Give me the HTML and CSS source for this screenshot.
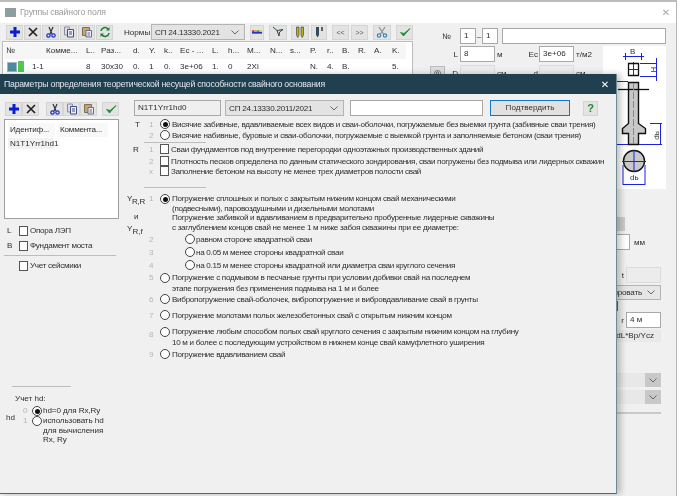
FILE: index.html
```html
<!DOCTYPE html>
<html lang="ru">
<head>
<meta charset="utf-8">
<title>Параметры свайного основания</title>
<link rel="stylesheet" href="styles.css">
</head>
<body>
<svg class="defs" width="0" height="0">
  <symbol id="i-plus" viewBox="0 0 12 12"><path d="M4.500 1h3v3.500H11v3H7.500V11h-3V7.500H1v-3h3.500z" fill="#0a1fd0"/></symbol>
  <symbol id="i-x" viewBox="0 0 12 12"><path d="M2 2l8 8M10 2l-8 8" stroke="#222" stroke-width="1.700" fill="none"/></symbol>
  <symbol id="i-cut" viewBox="0 0 12 12"><path d="M4 1l3 7M8 1L5 8" stroke="#334" stroke-width="1.200" fill="none"/><circle cx="3.500" cy="9.500" r="1.700" fill="none" stroke="#1a2fc0" stroke-width="1.200"/><circle cx="8.500" cy="9.500" r="1.700" fill="none" stroke="#1a2fc0" stroke-width="1.200"/></symbol>
  <symbol id="i-cut2" viewBox="0 0 12 12"><path d="M3 1l4.500 7M9 1L4.500 8" stroke="#8a8f98" stroke-width="1.200" fill="none"/><circle cx="3" cy="9.500" r="1.700" fill="none" stroke="#3f86b8" stroke-width="1.200"/><circle cx="9" cy="9.500" r="1.700" fill="none" stroke="#3f86b8" stroke-width="1.200"/></symbol>
  <symbol id="i-copy" viewBox="0 0 12 12"><path d="M1.500 1h5v8h-5z" fill="#d9dce6" stroke="#8a90a6"/><path d="M4.500 3.500h6V11h-6z" fill="#eef0f6" stroke="#3f4d85"/><path d="M6 6h3M6 8h3" stroke="#3f4d85"/></symbol>
  <symbol id="i-paste" viewBox="0 0 12 12"><path d="M1.500 1.500h7v8h-7z" fill="#c5a76a" stroke="#7d7058"/><path d="M5 4.500h5.500V11H5z" fill="#eceef3" stroke="#656e8a"/><path d="M6.500 7h2.500M6.500 9h2.500" stroke="#656e8a"/></symbol>
  <symbol id="i-check" viewBox="0 0 12 12"><path d="M1.500 6.500l3 3.500L11 2.500 5 7.500z" fill="#1f8a2e" stroke="#1f8a2e" stroke-width=".8"/></symbol>
  <symbol id="i-refresh" viewBox="0 0 12 12"><path d="M2 5a4 4 0 0 1 7-2M10 7a4 4 0 0 1-7 2" stroke="#1c7f2c" stroke-width="1.600" fill="none"/><path d="M10.500 1v3.500H7zM1.500 11V7.500H5z" fill="#1c7f2c"/></symbol>
  <symbol id="i-chev" viewBox="0 0 8 5"><path d="M.5.500L4 4 7.500.500" stroke="#666" fill="none"/></symbol>
</svg>

<div class="desk">
  <section class="win back">
    <header class="back-title">
      <span class="app-ico"></span><span class="back-name">Группы свайного поля</span>
      <span class="back-close">✕</span>
    </header>
    <div class="back-body">
      <div class="back-left">
        <div class="tools">
          <button class="tb"><svg><use href="#i-plus"/></svg></button>
          <button class="tb"><svg><use href="#i-x"/></svg></button>
          <button class="tb"><svg><use href="#i-cut"/></svg></button>
          <button class="tb"><svg><use href="#i-copy"/></svg></button>
          <button class="tb"><svg><use href="#i-paste"/></svg></button>
          <button class="tb"><svg><use href="#i-refresh"/></svg></button>
          <span class="norm-lab">Нормы</span>
          <span class="sel norm-sel">СП 24.13330.2021<svg class="chev"><use href="#i-chev"/></svg></span>
          <button class="tb t-a"><svg viewBox="0 0 12 12"><path d="M0 4h3v2H0z" fill="#d22"/><path d="M3 4h3v2H3z" fill="#c93"/><path d="M6 4h3v2H6z" fill="#2a3"/><path d="M9 4h3v2H9z" fill="#fb0"/><path d="M0 6h12v2H0z" fill="#23c"/></svg></button>
          <button class="tb t-b"><svg viewBox="0 0 12 12"><path d="M1 1l4 3.500L11 3.500 7.500 6 7 10 5 4.500" fill="none" stroke="#344" stroke-width="1"/></svg></button>
          <button class="tb t-c"><svg viewBox="0 0 12 12"><path d="M2.500 1h2.500v8L3.700 11.500 2.500 9zM7 1h2.500v8L8.200 11.500 7 9z" fill="#b9b21e" stroke="#333" stroke-width=".6"/></svg></button>
          <button class="tb t-d"><svg viewBox="0 0 12 12"><path d="M3 1h3v8L4.500 11.500 3 9z" fill="#34495e"/><path d="M9 1v4" stroke="#333" stroke-width="1.500"/></svg></button>
          <button class="tb t-e">&lt;&lt;</button>
          <button class="tb t-f">&gt;&gt;</button>
          <button class="tb t-g"><svg><use href="#i-cut2"/></svg></button>
          <button class="tb t-h"><svg><use href="#i-check"/></svg></button>
        </div>
        <div class="ptable">
          <div class="prow phead">
            <span class="c1">№</span><span class="c2">Комме...</span><span class="c3">L..</span><span class="c4">Раз...</span><span class="c5">d.</span><span class="c6">Y.</span><span class="c7">k..</span><span class="c8">Ec - ...</span><span class="c9">L.</span><span class="c10">h...</span><span class="c11">M...</span><span class="c12">N...</span><span class="c13">s...</span><span class="c14">P.</span><span class="c15">r..</span><span class="c16">B.</span><span class="c17">R.</span><span class="c18">A.</span><span class="c19">K.</span>
          </div>
          <div class="prow">
            <span class="c1 swatches"><i class="sw-a"></i><i class="sw-b"></i></span><span class="c2 idn">1-1</span><span class="c3">8</span><span class="c4">30x30</span><span class="c5">0.</span><span class="c6">1</span><span class="c7">0.</span><span class="c8">3e+06</span><span class="c9">1.</span><span class="c10">0</span><span class="c11">2Xi</span><span class="c12"></span><span class="c13"></span><span class="c14">N.</span><span class="c15">4.</span><span class="c16">B.</span><span class="c17"></span><span class="c18"></span><span class="c19">5.</span>
          </div>
        </div>
      </div>
      <div class="back-right">
        <div class="f-row f-no">
          <span class="f-lab">№</span><span class="box b-s">1</span><span class="dash">–</span><span class="box b-s">1</span><span class="box b-w"></span>
        </div>
        <div class="f-main">
          <div class="f-form">
            <div class="f-row">
              <span class="f-l1">L</span><span class="box b-m">8</span><span class="unit">м</span><span class="f-l2">Ec</span><span class="box b-m">3e+06</span><span class="unit">т/м2</span>
            </div>
            <div class="f-row f-gap">
              <span class="round-btn">◎</span><span class="f-l1 f-d">D</span><span class="box b-m off"></span><span class="unit">см</span><span class="f-l2">d</span><span class="box b-m off"></span><span class="unit">см</span>
            </div>
          </div>
          <svg class="pile" viewBox="603 46 63 143" width="63" height="143">
            <g fill="none" stroke="#1a22e0">
              <path d="M623 56.500h21M625.500 53v7M641.500 53v7M628 69.500h11M633.500 62v14M640 63.500h17M640 76.500h17M656.500 58v23M617 81.500h11M617 144.500h45M660.500 123v22M650 123.500h12"/>
            </g>
            <path d="M628.500 63.500h10v12h-10z" fill="none" stroke="#111" stroke-width="1.300"/>
            <text x="630" y="54" class="pile-t">B</text>
            <text x="650" y="72" class="pile-t rot">H</text>
            <path d="M628.500 82.500h10v41l7 5v5h-7v11h-10v-11h-6v-5l6-5z" fill="#c8c8c8" stroke="#111" stroke-width="1.400"/>
            <path d="M618 89.500h31" stroke="#111" stroke-width="1.300"/>
            <path d="M633.500 83v61" stroke="#7080e0" stroke-dasharray="7 2"/>
            <circle cx="634" cy="161" r="10.500" fill="#c8c8c8" stroke="#111" stroke-width="1.400"/>
            <path d="M622 161.500h24M634 150v22" stroke="#1a22e0"/>
            <path d="M623 165v20M645 165v20M623 184.500h22" stroke="#1a22e0" fill="none"/>
            <text x="630" y="180" class="pile-t">dь</text>
            <text x="652" y="138" class="pile-t rot">dь</text>
          </svg>
        </div>
        <div class="lower">
          <div class="low-row l-btn"><span class="gray-btn"></span></div>
          <div class="low-row l-mm"><span class="box b-e"></span><span class="unit">мм</span></div>
          <div class="low-row l-t"><span class="f-l3">t</span><span class="box b-r off"></span></div>
          <div class="low-row l-sel"><span class="sel sel-r">тировать<svg class="chev"><use href="#i-chev"/></svg></span></div>
          <div class="low-row l-chip"><span class="chip"></span></div>
          <div class="low-row l-r"><span class="f-l3">r</span><span class="box b-r">4 м</span></div>
          <div class="low-row l-form"><span class="readout">*dL*Bp/Ycz</span></div>
          <div class="low-row l-dis1"><span class="dis"><svg class="chev"><use href="#i-chev"/></svg></span></div>
          <div class="low-row l-dis2"><span class="dis"><svg class="chev"><use href="#i-chev"/></svg></span></div>
          <div class="low-rule"></div>
        </div>
      </div>
    </div>
  </section>

  <section class="win dlg">
    <header class="dlg-title">
      <span>Параметры определения теоретической несущей способности свайного основания</span>
      <span class="dlg-close">✕</span>
    </header>
    <div class="dlg-body">
      <aside class="side">
        <div class="tools side-tools">
          <button class="tb"><svg><use href="#i-plus"/></svg></button>
          <button class="tb"><svg><use href="#i-x"/></svg></button>
          <button class="tb sp1"><svg><use href="#i-cut"/></svg></button>
          <button class="tb"><svg><use href="#i-copy"/></svg></button>
          <button class="tb"><svg><use href="#i-paste"/></svg></button>
          <button class="tb sp2"><svg><use href="#i-check"/></svg></button>
        </div>
        <div class="list">
          <div class="list-head"><span class="lh1">Идентиф...</span><span class="lh2">Коммента...</span></div>
          <div class="list-item">N1T1Yrr1hd1</div>
        </div>
        <label class="side-check s-l"><span class="key">L</span><i class="cb"></i>Опора ЛЭП</label>
        <label class="side-check s-b"><span class="key">B</span><i class="cb"></i>Фундамент моста</label>
        <div class="rule side-rule"></div>
        <label class="side-check s-s"><span class="key"></span><i class="cb"></i>Учет сейсмики</label>
        <div class="hd">
          <div class="rule hd-rule"></div>
          <div class="hd-title">Учет hd:</div>
          <div class="hd-grid">
            <span class="hd-lab">hd</span>
            <div class="hd-opts">
              <div class="hd-opt"><span class="num">0</span><i class="rb on"></i><span>hd=0 для Rx,Ry</span></div>
              <div class="hd-opt"><span class="num">1</span><i class="rb"></i><span>использовать hd<br>для вычисления<br>Rx, Ry</span></div>
            </div>
          </div>
        </div>
      </aside>
      <main class="form">
        <div class="top-row">
          <span class="box d-id">N1T1Yrr1hd0</span>
          <span class="sel d-sel">СП 24.13330.2011/2021<svg class="chev"><use href="#i-chev"/></svg></span>
          <span class="box d-txt"></span>
          <button class="confirm">Подтвердить</button>
          <button class="tb help">?</button>
        </div>
        <div class="opt o-t1"><span class="lab">T</span><span class="num">1</span><i class="rb on"></i><span>Висячие забивные, вдавливаемые всех видов и сваи-оболочки, погружаемые без выемки грунта (забивные сваи трения)</span></div>
        <div class="opt"><span class="lab"></span><span class="num">2</span><i class="rb"></i><span>Висячие набивные, буровые и сваи-оболочки, погружаемые с выемкой грунта и заполняемые бетоном (сваи трения)</span></div>
        <div class="rule r-t"></div>
        <div class="opt o-r"><span class="lab lab-r">R</span><span class="num">1</span><i class="cb"></i><span>Сваи фундаментов под внутренние перегородки одноэтажных производственных зданий</span></div>
        <div class="opt o-r2"><span class="lab"></span><span class="num">2</span><i class="cb"></i><span>Плотность песков определена по данным статического зондирования, сваи погружены без подмыва или лидерных скважин</span></div>
        <div class="opt"><span class="lab"></span><span class="num">x</span><i class="cb"></i><span>Заполнение бетоном на высоту не менее трех диаметров полости свай</span></div>
        <div class="rule r-y"></div>
        <div class="opt o-y">
          <span class="lab lab-y">Y<sub>R,R</sub></span><span class="num">1</span><i class="rb on"></i>
          <span>Погружение сплошных и полых с закрытым нижним концом свай механическими<br>(подвесными), паровоздушными и дизельными молотами</span>
        </div>
        <div class="y-block">
          <div class="y-side"><span>и</span><span>Y<sub>R,f</sub></span></div>
          <p class="para">Погружение забивкой и вдавливанием в предварительно пробуренные лидерные скважины<br>с заглублением концов свай не менее 1 м ниже забоя скважины при ее диаметре:</p>
        </div>
        <div class="opt sub o-2"><span class="lab"></span><span class="num">2</span><i class="rb"></i><span>равном стороне квадратной сваи</span></div>
        <div class="opt sub o-3"><span class="lab"></span><span class="num">3</span><i class="rb"></i><span>на 0.05 м менее стороны квадратной сваи</span></div>
        <div class="opt sub o-3"><span class="lab"></span><span class="num">4</span><i class="rb"></i><span>на 0.15 м менее стороны квадратной или диаметра сваи круглого сечения</span></div>
        <div class="opt o-5"><span class="lab"></span><span class="num">5</span><i class="rb"></i><span>Погружение с подмывом в песчаные грунты при условии добивки свай на последнем<br>этапе погружения без применения подмыва на 1 м и более</span></div>
        <div class="opt o-6"><span class="lab"></span><span class="num">6</span><i class="rb"></i><span>Вибропогружение свай-оболочек, вибропогружение и вибровдавливание свай в грунты</span></div>
        <div class="opt o-7"><span class="lab"></span><span class="num">7</span><i class="rb"></i><span>Погружение молотами полых железобетонных свай с открытым нижним концом</span></div>
        <div class="opt o-8"><span class="lab"></span><span class="num num-8">8</span><i class="rb"></i><span>Погружение любым способом полых свай круглого сечения с закрытым нижним концом на глубину<br>10 м и более с последующим устройством в нижнем конце свай камуфлетного уширения</span></div>
        <div class="opt o-9"><span class="lab"></span><span class="num">9</span><i class="rb"></i><span>Погружение вдавливанием свай</span></div>
      </main>
    </div>
  </section>
</div>
</body>
</html>
```

FILE: styles.css
```css
* { box-sizing: border-box; }
html, body { margin: 0; padding: 0; }
body { width: 680px; height: 496px; overflow: hidden; background: #fff; font: 8.1px/11px "Liberation Sans", "DejaVu Sans", sans-serif; color: #2e2e2e; }
.defs { position: absolute; }
.desk { position: relative; width: 680px; height: 496px; overflow: hidden; filter: blur(.3px); }
.win { position: absolute; }

/* buttons and fields */
.tb { width: 17px; height: 15px; padding: 1px; margin: 0; border: 1px solid #d4d4d4; background: #e3e3e3; display: inline-flex; align-items: center; justify-content: center; font: 8px/1 "Liberation Sans", sans-serif; color: #333; }
.tb svg { width: 12px; height: 12px; display: block; }
.tools { display: flex; align-items: center; }
.box { display: block; height: 16px; padding: 1px 3px; line-height: 12px; background: #fff; border: 1px solid #a9a9a9; flex: none; }
.box.off { background: #ececec; border-color: #dcdcdc; }
.sel { display: flex; align-items: center; justify-content: space-between; height: 16px; padding: 0 5px 0 3px; background: #e3e3e3; border: 1px solid #b4b4b4; flex: none; letter-spacing: -.2px; }
.chev { width: 8px; height: 5px; flex: none; }
.rule { height: 1px; background: #bdbdbd; }
.cb { display: block; flex: none; width: 9px; height: 10px; background: #fff; border: 1px solid #555; }
.rb { display: block; flex: none; position: relative; width: 10px; height: 10px; background: #fff; border: 1px solid #444; border-radius: 50%; }
.rb.on::after { content: ""; position: absolute; left: 1.500px; top: 1.500px; width: 5px; height: 5px; background: #111; border-radius: 50%; }

/* window behind */
.back { left: 0; top: 0; width: 677px; height: 496px; background: #f0f0f0; border-top: 2px solid #bcbcbc; border-right: 1px solid #b5b5b5; }
.back-title { height: 21px; background: #fff; display: flex; align-items: center; padding: 0 6px 0 5px; font-size: 8.7px; color: #9a9a9a; letter-spacing: -.15px; }
.app-ico { width: 11px; height: 9px; background: #8aa0a0; border: 1px solid #9a9a9a; margin-right: 4px; }
.back-name { flex: 1; }
.back-close { font-size: 10px; color: #aaa; }
.back-body { display: flex; align-items: flex-start; }
.back-left { width: 428px; flex: none; padding: 1px 0 0 6px; }
.back-left .tools { height: 16px; }
.back-left .tb { height: 15px; margin-right: 1px; }
.norm-lab { margin: 0 4px 0 10px; width: 23px; }
.norm-sel { width: 94px; margin-right: 5px; }
.back-left .t-a { width: 14px; margin-right: 5px; }
.back-left .t-b { width: 18px; margin-right: 4px; }
.back-left .t-c { width: 18px; margin-right: 2px; }
.back-left .t-d { width: 16px; margin-right: 5px; }
.back-left .t-e { width: 17px; margin-right: 2px; color: #555; font-size: 7px; }
.back-left .t-f { width: 17px; margin-right: 5px; color: #555; font-size: 7px; }
.back-left .t-g { width: 18px; margin-right: 5px; }
.ptable { margin: 1px 0 0 -4px; width: 411px; height: 40px; background: #fff; border: 1px solid #bcbcbc; padding-top: 1px; }
.prow { display: flex; height: 15px; align-items: center; }
.phead { height: 16px; }
.phead span { background: #f6f6f6; height: 16px; line-height: 16px; }
.prow span { flex: none; padding-left: 2px; white-space: nowrap; overflow: hidden; }
.c1 { width: 40px; padding-left: 4px; margin-left: 1px; }
.c2 { width: 40px; }
.c3 { width: 15px; }
.c4 { width: 32px; }
.c5 { width: 16px; }
.c6 { width: 15px; }
.c7 { width: 16px; }
.c8 { width: 32px; }
.c9 { width: 16px; }
.c10 { width: 19px; }
.c11 { width: 23px; }
.c12 { width: 20px; }
.c13 { width: 20px; }
.c14 { width: 17px; }
.c15 { width: 15px; }
.c16 { width: 16px; }
.c17 { width: 16px; }
.c18 { width: 18px; }
.c19 { width: 16px; }
.prow .swatches { display: flex; gap: 1px; padding-left: 3px; align-items: center; }
.prow .idn { margin-left: -14px; width: 54px; }
.sw-a { width: 10px; height: 10px; background: #4f8a9f; border: 1px solid #9fb7c0; }
.sw-b { width: 6px; height: 11px; background: #52c752; }
.back-right { flex: 1; display: flex; flex-direction: column; padding-top: 5px; min-width: 0; }
.f-row { display: flex; align-items: center; }
.f-no { height: 16px; }
.f-lab { width: 32px; padding-left: 14px; flex: none; }
.b-s { width: 16px; }
.dash { width: 6px; text-align: center; }
.b-w { width: 164px; margin-left: 4px; }
.f-main { display: flex; align-items: flex-start; margin-top: 2px; }
.f-form { width: 175px; flex: none; }
.f-l1 { width: 32px; text-align: right; padding-right: 2px; flex: none; }
.f-l2 { width: 30px; text-align: right; padding-right: 1px; flex: none; }
.b-m { width: 35px; }
.unit { margin-left: 2px; width: 12px; flex: none; white-space: nowrap; }
.f-gap { margin-top: 3px; }
.round-btn { width: 15px; height: 15px; flex: none; margin-left: 2px; background: #ddd; border: 1px solid #bbb; text-align: center; }
.f-d { width: 15px; }
.pile { display: block; background: #fff; flex: none; }
.pile-t { font: 8px "Liberation Sans", sans-serif; fill: #333; }
.rot { transform-box: fill-box; transform-origin: center; transform: rotate(-90deg); }
.lower { display: flex; flex-direction: column; align-items: flex-end; margin-top: 28px; padding-right: 15px; }
.low-row { display: flex; align-items: center; flex: none; }
.gray-btn { width: 50px; height: 14px; background: #ccc; margin-right: 36px; }
.l-mm { margin-top: 3px; margin-right: 15px; }
.l-mm .unit { margin-left: 4px; }
.b-e { width: 200px; }
.l-t { margin-top: 17px; }
.f-l3 { margin-right: 2px; }
.b-r { width: 35px; }
.l-sel { margin-top: 2px; }
.sel-r { width: 100px; height: 15px; background: #e6e6e6; justify-content: flex-end; gap: 5px; }
.l-chip { margin-top: 1px; margin-right: 43px; }
.chip { display: block; width: 10px; height: 10px; border: 1px solid #666; background: #ddd; }
.l-r { margin-top: 1px; }
.l-form { margin-top: 2px; }
.readout { display: block; width: 60px; height: 12px; background: #e9e9e9; text-align: right; padding-right: 7px; }
.l-dis1 { margin-top: 31px; }
.l-dis2 { margin-top: 3px; }
.dis { display: flex; align-items: center; justify-content: center; width: 100px; height: 14px; background: linear-gradient(90deg, #e8e8e8 84%, #c8c8c8 84%); padding-left: 84px; }
.low-rule { width: 100px; height: 2px; background: #c9c9c9; margin-top: 8px; }

/* dialog */
.dlg { left: 0; top: 74px; width: 617px; height: 420px; background: #f0f0f0; border-right: 1px solid #6f8a93; border-bottom: 1px solid #52666e; box-shadow: 4px 0 6px rgba(0,0,0,.22); }
.dlg-title { height: 20px; background: #21404f; color: #dfe8ec; display: flex; align-items: center; justify-content: space-between; padding: 0 7px 0 4px; font-size: 8.7px; letter-spacing: -.22px; }
.dlg-close { font-size: 10px; color: #fff; }
.dlg-body { display: flex; align-items: flex-start; }
.side { width: 125px; flex: none; padding: 7px 0 0 5px; }
.side-tools { height: 15px; }
.side-tools .tb { height: 14px; }
.sp1 { margin-left: 7px; }
.sp2 { margin-left: 5px; }
.list { width: 115px; height: 100px; margin: 3px 0 0 -1px; background: #fff; border: 1px solid #a0a0a0; padding: 3px 0 0 3px; }
.list-head { display: flex; height: 14px; line-height: 14px; letter-spacing: -.2px; }
.list-head span { background: #f8f8f8; padding-left: 2px; }
.lh1 { width: 47px; margin-right: 3px; }
.lh2 { width: 50px; }
.list-item { width: 46px; margin-top: 1px; padding-left: 2px; height: 11px; background: #f1f1f1; white-space: nowrap; }
.side-check { display: flex; align-items: center; height: 11px; letter-spacing: -.3px; }
.side-check .cb { margin-right: 2px; }
.key { width: 14px; padding-left: 2px; flex: none; }
.s-l { margin-top: 6px; }
.s-b { margin-top: 4px; }
.side-rule { width: 112px; margin: 4px 0 4px -1px; }
.hd { margin-top: 115px; }
.hd-rule { width: 59px; margin-left: 7px; }
.hd-title { margin: 6px 0 0 10px; }
.hd-grid { display: flex; align-items: flex-start; margin-top: 2px; }
.hd-lab { width: 17px; margin-top: 6px; margin-left: 1px; flex: none; }
.hd-opt { display: flex; align-items: flex-start; line-height: 9.500px; letter-spacing: -.1px; }
.hd-opt .num { width: 9px; }
.hd-opt .rb { margin-right: 1px; }
.num { color: #b5b5b5; width: 11px; flex: none; }

.form { flex: 1; padding: 6px 0 0 0; min-width: 0; }
.top-row { display: flex; align-items: center; margin-left: 9px; height: 16px; }
.d-id { width: 87px; margin-right: 4px; background: #efefef; }
.d-sel { width: 119px; margin-right: 6px; }
.d-txt { width: 133px; margin-right: 7px; }
.confirm { width: 80px; height: 16px; margin: 0 13px 0 0; padding: 0; background: #e1e1e1; border: 1px solid #0f78c8; font: 8.1px/1 "Liberation Sans", sans-serif; color: #333; }
.help { width: 15px; height: 15px; color: #1f8a2e; font-weight: bold; font-size: 11px; }
.opt { display: flex; align-items: flex-start; white-space: nowrap; letter-spacing: -.3px; }
.opt .rb, .opt .cb { margin-right: 2px; }
.lab { width: 24px; flex: none; }
.o-t1 { margin-top: 3px; }
.o-t1 .lab { padding-left: 10px; }
.r-t { width: 62px; margin: 1px 0 1px 19px; }
.lab-r { padding-left: 8px; }
.o-r { height: 12px; }
.o-r2 { height: 10px; }
.r-y { width: 62px; margin: 10px 0 6px 19px; }
.lab-y { padding-left: 2px; }
.lab-y sub { font-size: 8px; line-height: 0; }
.o-y { line-height: 9.500px; }
.y-block { display: flex; margin-top: -1px; height: 20px; }
.y-side { width: 47px; flex: none; display: flex; flex-direction: column; }
.y-side span:first-child { padding-left: 9px; line-height: 9px; }
.y-side span:last-child { padding-left: 2px; margin-top: 3px; line-height: 9px; }
.y-side sub { font-size: 8px; line-height: 0; }
.para { margin: 1px 0 0; line-height: 9.500px; white-space: nowrap; letter-spacing: -.3px; }
.sub .rb { margin-left: 25px; margin-right: 1px; }
.sub.o-2 { margin-top: 2px; }
.sub.o-3 { margin-top: 2px; }
.o-5 { margin-top: 2px; line-height: 10.500px; }
.o-6 { margin-top: 0; }
.o-7 { margin-top: 5px; }
.o-8 { margin-top: 6px; line-height: 10.500px; }
.num-8 { margin-top: 3px; }
.o-9 { margin-top: 1px; }
```
